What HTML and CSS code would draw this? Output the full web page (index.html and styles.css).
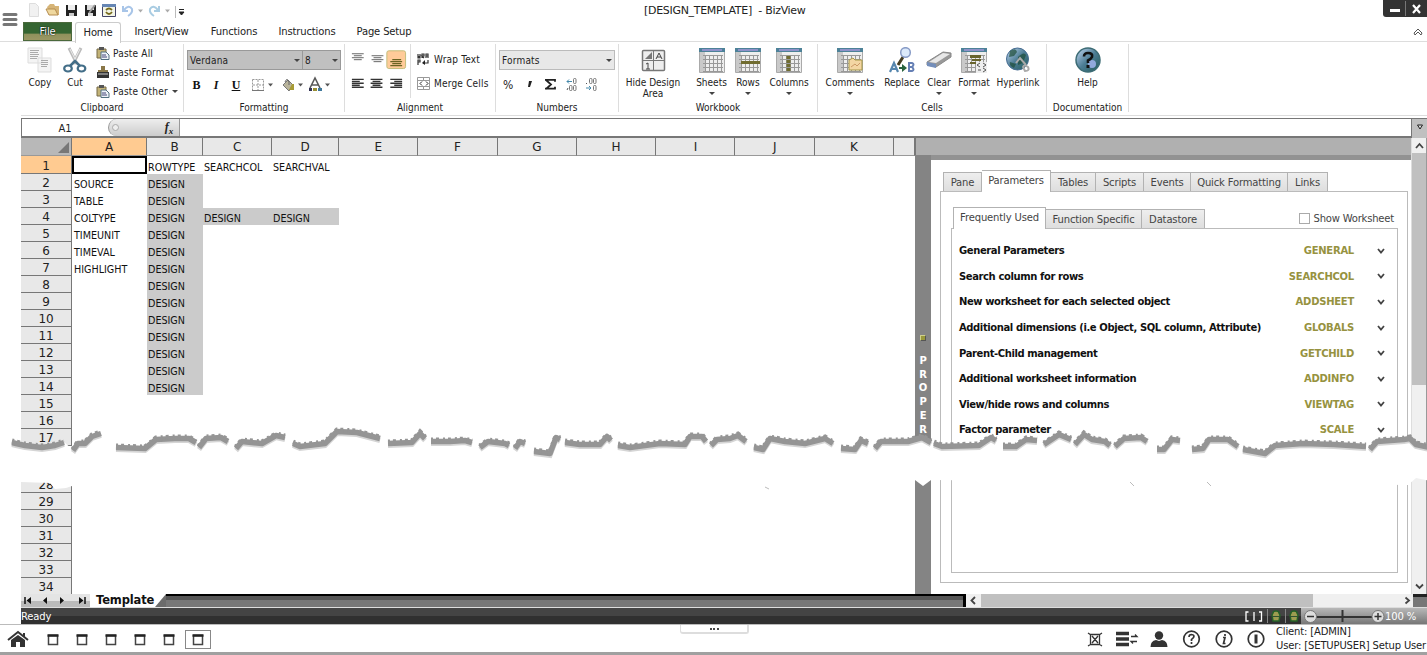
FILE: index.html
```html
<!DOCTYPE html>
<html lang="en">

<head>
    <meta charset="utf-8">
    <title>[DESIGN_TEMPLATE] - BizView</title>
    <link rel="stylesheet" href="styles.css">
</head>

<body>
    <svg class="defs">
        <defs>
            <linearGradient id="blue" x1="0" y1="0" x2="1" y2="1">
                <stop offset="0" stop-color="#c5daf5" /><stop offset=".5" stop-color="#4d7d95" /><stop offset="1" stop-color="#235b58" />
            </linearGradient>
        </defs>
        <symbol id="sheet" viewBox="0 0 26 26">
            <path d="M.5 1.5h25v24H.5z" fill="#eee" stroke="#aaa" />
            <path d="M0 1h26v4H0z" fill="#4d8298" /><path d="M3 2h20v2H3z" fill="#8e91c9" />
            <path d="M1 5h5v20H1z" fill="#c9c9c9" />
            <path d="M6.500 8v16M10.500 8v16M14.500 8v16M18.500 8v16M22.500 8v16M4 8.500h20M4 12.500h20M4 16.500h20M4 20.500h20M4 24.500h20" stroke="#999" />
        </symbol>
        <symbol id="clip" viewBox="0 0 14 13">
            <path d="M1 2h9v9H1z" fill="#c3b377" stroke="#776b48" /><path d="M3 0h5v3H3z" fill="#555" />
            <path d="M5 5h5l3 3v4.500H5z" fill="#edf3f8" stroke="#527080" /><path d="M6 8h4M6 10h5" stroke="#447" />
        </symbol>
        <symbol id="page" viewBox="0 0 26 26">
            <path d="M1 1h14v15H1zM11 11h13v14H11z" fill="#f4f4f4" stroke="#ddd" />
            <path d="M3 3.500h9M3 5.500h8M3 7.500h9M3 9.500h8M3 11.500h7M14 13.500h7M14 15.500h7M14 17.500h7M14 19.500h6" stroke="#aaa" />
        </symbol>
    </svg>

    <header class="titlebar">
        <svg class="burger" width="16" height="16"><path d="M2 2.500h12M2 7.500h12M2 12.500h12" stroke="#777" stroke-width="3" stroke-linecap="round" /></svg>
        <svg class="quick" width="160" height="18">
            <path d="M1.500 2.500h6l3 3v10h-9z" fill="#f1f1f1" stroke="#ddd" />
            <path d="M19 6l3-3h4l1 2h4v9H21z" fill="#d6b477" /><path d="M18 8h9l3 6h-9z" fill="#efd89f" stroke="#b58d50" />
            <path d="M38 4h11v11H38z" fill="#222" /><path d="M40 4h7v5h-7z" fill="#eee" /><path d="M41 12h5v3h-5z" fill="#ccc" />
            <path d="M57 4h11v11H57z" fill="#222" /><path d="M59 4h7v5h-7zM60 12h5v3h-5z" fill="#ddd" /><path d="M61 12l6-8" stroke="#999" stroke-width="2" />
            <path d="M74.500 3.500h13v12h-13z" fill="#f3f5e6" stroke="#446" /><path d="M74 4.500h14" stroke="#6686b4" stroke-width="3" /><path d="M78 9q3-3 6 0M84 11q-3 4-6 0" fill="none" stroke="#776a1c" stroke-width="1.800" />
            <path d="M95 5v5h5M96 9q5-6 8-1 1 4-4 7" fill="none" stroke="#a8c5e8" stroke-width="2" />
            <path d="M110 8.500h5l-2.500 3z" fill="#aaa" />
            <path d="M131 5v5h-5M130 9q-5-6-8-1-1 4 4 7" fill="none" stroke="#a9cce2" stroke-width="2" />
            <path d="M137 8.500h5l-2.500 3z" fill="#aaa" />
            <path d="M147.500 5v12" stroke="#bbb" /><path d="M151 8.500h5M151 11h5l-2.500 3z" stroke="#222" fill="#222" />
        </svg>
        <span class="caption">[DESIGN_TEMPLATE] &nbsp;- BizView</span>
        <svg class="window-buttons" width="44" height="18">
            <path d="M0 0h44v17H3q-3 0-3-3z" fill="#333" /><path d="M22.500 1v15" stroke="#777" /><path d="M7 10.500h10" stroke="#fff" stroke-width="3" />
            <path d="M30 5l7 8M37 5l-7 8" stroke="#fff" stroke-width="2.200" />
        </svg>
    </header>

    <nav class="tabs">
        <span class="tab file">File</span>
        <span class="tab home">Home</span>
        <span class="tab insert">Insert/View</span>
        <span class="tab functions">Functions</span>
        <span class="tab instructions">Instructions</span>
        <span class="tab setup">Page Setup</span>
        <svg class="collapse" width="10" height="8"><path d="M1 5l4-4 4 4-1 2-3-3-3 3z" fill="#fff" stroke="#555" /></svg>
    </nav>

    <section class="ribbon">
        <div class="group clipboard">
            <div class="tools">
                <div class="big w38"><svg width="26" height="26"><use href="#page" /></svg>Copy</div>
                <div class="big w32"><svg width="26" height="26">
                        <path d="M7 1l8 16M19 1l-8 16" stroke="#bbb" stroke-width="3" />
                        <path d="M8 2l7 14M18 2l-7 14" stroke="#eee" />
                        <ellipse cx="6" cy="21.500" rx="3.800" ry="3" fill="none" stroke="#436e88" stroke-width="2.200" /><ellipse cx="19.500" cy="21.500" rx="3.800" ry="3" fill="none" stroke="#436e88" stroke-width="2.200" />
                        <path d="M8 19l5-5 5 5" fill="none" stroke="#436e88" stroke-width="2.500" />
                    </svg>Cut</div>
                <div class="small-list">
                    <div><svg width="14" height="13"><use href="#clip" /></svg>Paste All</div>
                    <div><svg width="14" height="13"><path d="M5 0h4v4h3v2H2V4h3z" fill="#8a7748" /><path d="M1 6h12v6H1z" fill="#333" /><path d="M2 8h10" stroke="#ccc" /></svg>Paste Format</div>
                    <div><svg width="14" height="13"><use href="#clip" /></svg>Paste Other <i class="arrow"></i></div>
                </div>
            </div>
            <div class="group-name">Clipboard</div>
        </div>

        <div class="group formatting">
            <div class="tools stack">
                <div class="combos">
                    <div class="combo font">Verdana<i class="arrow"></i></div>
                    <div class="combo size">8<i class="arrow"></i></div>
                </div>
                <div class="letters">
                    <b>B</b><em>I</em><u>U</u>
                    <svg width="90" height="18">
                        <path d="M6.500 3.500h11v11h-11zM12 4v11M7 9h11" fill="none" stroke="#999" stroke-dasharray="2 1" /><path d="M6 14.500h12" stroke="#777" />
                        <path d="M22 7.500h5l-2.500 3zM52 7.500h5l-2.500 3zM79 7.500h5l-2.500 3z" fill="#555" />
                        <path d="M37 9l5-5 5 5-4 6z" fill="#b9b49c" stroke="#777" /><path d="M39 6q2-5 4 0v3" fill="none" stroke="#666" /><path d="M46 8h2v6h-5z" fill="#a79b35" />
                        <path d="M64 12l5-10 5 10M66 9h6" fill="none" stroke="#595959" stroke-width="1.600" />
                        <path d="M63 12h3v3h-3z" fill="#335" /><path d="M67 12h4v3h-4z" fill="#988e34" /><path d="M72 12h4v3h-4z" fill="#3f789b" />
                    </svg>
                </div>
            </div>
            <div class="group-name">Formatting</div>
        </div>

        <div class="group alignment">
            <div class="tools">
                <svg class="aligns" width="66" height="54" viewBox="0 -1 66 54">
                    <rect x="42.500" y="5.500" width="19" height="18" rx="2" fill="#ffcb99" stroke="#c3bc79" />
                    <path d="M7 8.500h12M9 10.500h8M7 12.500h12M9 14.500h8M27 10.500h12M29 12.500h8M27 14.500h12M29 16.500h8" stroke="#666" />
                    <path d="M48 14.500h9M46 16.500h12M48 18.500h9M46 20.500h12" stroke="#6b6423" stroke-width="1.200" />
                    <path d="M7 34.500h12M7 36.500h8M7 38.500h12M7 40.500h8M7 42.500h12M26 34.500h12M28 36.500h8M26 38.500h12M28 40.500h8M26 42.500h12M46 34.500h12M50 36.500h8M46 38.500h12M50 40.500h8M46 42.500h12" stroke="#333" stroke-width="1.400" />
                </svg>
                <div class="small-list wrap">
                    <div><svg width="14" height="13"><path d="M1 1v4h1v-2v2h1V1M5 5V1h2v2H5l2 2M9 5V1h2v4M9 3h2M1 12V7h2v2H1M6 10h5V7" fill="none" stroke="#333" stroke-width="1.200" /><path d="M5 10l3-3v5z" fill="#222" /></svg>Wrap Text</div>
                    <div><svg width="14" height="13"><path d="M.5.500h12v12H.5zM6.500 0v4M6.500 9v4M0 3.500h13M0 9.500h13" fill="none" stroke="#999" /><path d="M5 4.500L3 6.500l2 2M9 4.500l2 2-2 2" fill="none" stroke="#222" /></svg>Merge Cells</div>
                </div>
            </div>
            <div class="group-name">Alignment</div>
        </div>

        <div class="group numbers">
            <div class="tools stack">
                <div class="combo formats">Formats<i class="arrow"></i></div>
                <div class="signs">
                    <span class="percent">%</span>
                    <svg width="90" height="18">
                        <path d="M12 5h3l-2 6h-2z" fill="#222" />
                        <path d="M28 3.800h10v2M29 4l5 4.500-5 4.500M28 12.700h10v-2" fill="none" stroke="#222" stroke-width="1.800" />
                        <path d="M50 5.500h5M52 3.500l-2 2 2 2" fill="none" stroke="#48a" />
                        <path d="M50 14l1-2M70 7l-1 1" stroke="#555" />
                        <g fill="none" stroke="#777"><rect x="56.500" y="2.500" width="2.500" height="5" rx="1" /><rect x="52.500" y="9.500" width="2.500" height="5" rx="1" /><rect x="56.500" y="9.500" width="2.500" height="5" rx="1" /><rect x="72.500" y="2.500" width="2.500" height="5" rx="1" /><rect x="76.500" y="2.500" width="2.500" height="5" rx="1" /><rect x="76.500" y="9.500" width="2.500" height="5" rx="1" /></g>
                        <path d="M69 12h5M72 10l2 2-2 2" fill="none" stroke="#48a" />
                    </svg>
                </div>
            </div>
            <div class="group-name">Numbers</div>
        </div>

        <div class="group workbook">
            <div class="tools">
                <div class="big w68"><svg width="26" height="26"><rect x="2.500" y="3.500" width="22" height="20" rx="1" fill="#eee" stroke="#777" stroke-width="1.500" /><path d="M13.500 4v19M3 13.500h21" stroke="#777" /><path d="M5 12h7V5z" fill="#777" /><path d="M16 12l3-6 3 6M17 10h4M8 16v6M6 17l2-1M6 22h4" fill="none" stroke="#444" /></svg>Hide Design<br>Area</div>
                <div class="divider"></div>
                <div class="big w49"><svg width="26" height="26"><use href="#sheet" /></svg>Sheets<i class="arrow"></i></div>
                <div class="big w24"><svg width="26" height="26"><use href="#sheet" /><path d="M6 15.500h19" stroke="#706c30" stroke-width="3" /></svg>Rows<i class="arrow"></i></div>
                <div class="big w58"><svg width="26" height="26"><use href="#sheet" /><path d="M12.500 9v16" stroke="#706c30" stroke-width="4" stroke-dasharray="3 1" /></svg>Columns<i class="arrow"></i></div>
            </div>
            <div class="group-name">Workbook</div>
        </div>

        <div class="group cells">
            <div class="tools">
                <div class="big w64"><svg width="26" height="26"><use href="#sheet" /><path d="M12 13l4-2 2 2h7v10H12z" fill="#f4d6a3" stroke="#a69849" /><path d="M14 20l4-3 2 2 3-3" stroke="#c96" fill="none" /></svg>Comments<i class="arrow"></i></div>
                <div class="big w40"><svg width="26" height="26"><path d="M14 10l-5 8" stroke="#443d22" stroke-width="3" /><circle cx="16.500" cy="5.500" r="4.800" fill="#dbe9fa" stroke="#879bc6" stroke-width="1.500" /><path d="M1 25l4-9 4 9M3 22h5" fill="none" stroke="#5586ae" stroke-width="2.200" /><path d="M20 16v8h3q3-1 0-4h-3 3q3-3 0-4z" fill="none" stroke="#6680b5" stroke-width="2" /><path d="M10 20h3v-3l5 4-5 4v-3h-3z" fill="#28633d" /></svg>Replace</div>
                <div class="big w34"><svg width="26" height="26"><path d="M1 15L17 5l8 1v4L10 20l-9-2z" fill="#999" stroke="#888" /><path d="M1 15l9 2v4l-9-2z" fill="#748eba" /><path d="M3 15L17 6l7 1-14 9z" fill="#e8e8e8" /></svg>Clear<i class="arrow"></i></div>
                <div class="big w36"><svg width="26" height="26"><use href="#sheet" /><path d="M9 8h11v3H9zM11 12h9v2h-9zM9 15h9v2H9z" fill="#68642d" /><path d="M15 15h11v11H15z" fill="#eee" /><path d="M19 16l-3 2 3 2M22 16l3 2-3 2M17 23h3M22 21l3 2-3 2" fill="none" stroke="#555" /></svg>Format<i class="arrow"></i></div>
                <div class="big w52"><svg width="26" height="26"><circle cx="12.500" cy="12" r="11" fill="url(#blue)" stroke="#456b91" /><path d="M5 4q6-4 7 1L9 9l-5 1zM13 10q6-6 8-2l-3 8-5 2zM5 15l6 2-2 4q-5-2-4-6z" fill="#1e4d39" opacity=".7" /><path d="M11 16l4-5 6 7M18 20q1-3 5 0 2 4-3 4z" fill="none" stroke="#aaa" stroke-width="2" /></svg>Hyperlink</div>
            </div>
            <div class="group-name">Cells</div>
        </div>

        <div class="group documentation">
            <div class="tools">
                <div class="big w81"><svg width="26" height="26"><circle cx="13" cy="13" r="12" fill="url(#blue)" stroke="#3d6c75" stroke-width="1.500" /><circle cx="17" cy="17" r="4" fill="#91a9dc" /><path d="M9 9.500q0-3.500 4-3.500 5 0 4 4-1 2-4 3.500v2.500" fill="none" stroke="#111" stroke-width="2.600" /><path d="M11.500 18h3v3h-3z" fill="#111" /></svg>Help</div>
            </div>
            <div class="group-name">Documentation</div>
        </div>
    </section>

    <div class="formula">
        <div class="cell-name">A1</div>
        <div class="fx"><i class="knob"></i><span>f<sub>x</sub></span></div>
        <div class="formula-text"></div>
        <div class="expand"><svg width="8" height="7"><path d="M1.500 1h5L4 5z" fill="#ddd" stroke="#222" /></svg></div>
    </div>

    <main class="workspace">
        <table class="grid">
            <thead>
                <tr class="heads">
                    <th class="corner"><svg width="12" height="12"><path d="M12 1v11H1z" fill="#777" /></svg></th>
                    <th class="col-a active">A</th>
                    <th class="col-b">B</th>
                    <th class="col-c">C</th>
                    <th class="col-d">D</th>
                    <th class="col-x">E</th>
                    <th class="col-x">F</th>
                    <th class="col-x">G</th>
                    <th class="col-x">H</th>
                    <th class="col-x">I</th>
                    <th class="col-x">J</th>
                    <th class="col-x">K</th>
                    <th class="col-rest"></th>
                </tr>
            </thead>
            <tbody id="rows"></tbody>
        </table>

        <aside class="side">
            <div class="side-top"></div>
            <div class="properties"><i class="pin"></i><b>P</b><b>R</b><b>O</b><b>P</b><b>E</b><b>R</b></div>
            <div class="panel">
                <div class="panel-tabs outer">
                    <span class="w-pane">Pane</span><span class="w-par on">Parameters</span><span class="w-tab">Tables</span><span class="w-scr">Scripts</span><span class="w-eve">Events</span><span class="w-qf">Quick Formatting</span><span class="w-lin">Links</span>
                </div>
                <div class="outer-box">
                    <div class="panel-tabs inner">
                        <span class="w-freq on">Frequently Used</span><span class="w-func">Function Specific</span><span class="w-data">Datastore</span>
                        <label><i></i>Show Worksheet</label>
                    </div>
                    <div class="inner-box" id="params"></div>
                </div>
            </div>
        </aside>

        <div class="vscroll">
            <svg width="16" height="15"><path d="M4 10l3.500-4 3.500 4" fill="none" stroke="#444" stroke-width="1.800" /></svg>
            <div class="vthumb"></div>
            <svg width="16" height="15"><path d="M4 5.500l3.500 3.500L11 5.500" fill="none" stroke="#444" stroke-width="1.800" /></svg>
        </div>

        <svg class="tear" id="tear" width="1427" height="70" viewBox="0 425 1427 70"></svg>
    </main>

    <div class="sheetbar">
        <svg class="sheet-nav" width="69" height="13"><path d="M4 3v7M64 3v7" stroke="#111" stroke-width="1.500" /><path d="M10 3v7L5.500 6.500zM26 3v7l-4-3.500zM39 3v7l4-3.500zM58 3v7l4.500-3.500z" fill="#111" /></svg>
        <div class="sheet-tab">Template</div>
        <div class="sheet-rest"></div>
        <div class="hscroll">
            <svg width="15" height="13"><path d="M9 3L5.500 6.500 9 10" fill="none" stroke="#444" stroke-width="1.800" /></svg>
            <div class="hthumb"></div>
            <svg width="15" height="13"><path d="M7.500 3.500L11 6.500 7.500 9.500" fill="none" stroke="#444" stroke-width="1.800" /></svg>
        </div>
        <div class="bar-end"></div>
    </div>

    <div class="status">
        <span class="ready">Ready</span>
        <svg class="status-icons" width="56" height="16">
            <path d="M3.500 4H1v9h2.500M9 4v9M14 4h2.500v9H14" fill="none" stroke="#fff" stroke-width="1.300" /><path d="M22.500 1v14M40.500 1v14" stroke="#888" />
            <path d="M31 3q3 0 3 2l1 2-1 6h-6l-1-6 1-2q0-2 3-2zM49 3q3 0 3 2l1 2-1 6h-6l-1-6 1-2q0-2 3-2z" fill="#9d9c50" stroke="#256128" stroke-width="1.500" /><path d="M27 8.500h8M45 8.500h8" stroke="#315330" />
        </svg>
        <div class="zoom">
            <svg width="84" height="16"><path d="M15 9h56M41.500 2v12" stroke="#333" stroke-width="2" /><circle cx="9.500" cy="8.500" r="6" fill="#ddd" stroke="#777" /><circle cx="77" cy="8.500" r="6" fill="#ddd" stroke="#777" /><path d="M6 8.500h7M73.500 8.500h7M77 5v7" stroke="#333" stroke-width="1.500" /></svg>100 %
        </div>
    </div>

    <footer>
        <svg width="218" height="28">
            <path d="M8 15l10-8 10 8M24 8v4" fill="none" stroke="#333" stroke-width="2" /><path d="M11 15l7-5 7 5v7h-5v-5h-4v5h-5z" fill="#333" />
            <g id="panes" fill="none"></g>
            <rect x="185.500" y="5.500" width="25" height="18" fill="none" stroke="#888" />
        </svg>
        <div class="handle"><i></i><i></i><i></i></div>
        <svg class="user-icons" width="190" height="28">
            <path d="M4.500 9.500h9v10h-9zM2 8l3 2M16 8l-3 2M2 21l3-2M16 21l-3-2M6 11l6 7M12 11l-6 7" fill="none" stroke="#333" stroke-width="1.300" />
            <path d="M30 8.500h13M30 14h13M30 19.500h13" stroke="#333" stroke-width="3.700" /><path d="M45 11.500h6l-2-2M51 16.500h-6l2 2" fill="none" stroke="#333" stroke-width="1.300" />
            <circle cx="73" cy="10.500" r="4.200" fill="#333" /><path d="M64.500 22q0-6 5.500-7l3 1 3-1q5.500 1 5.500 7z" fill="#333" />
            <g fill="none" stroke="#333" stroke-width="1.700"><circle cx="105.500" cy="14" r="7.800" /><circle cx="138" cy="14" r="7.800" /><circle cx="170" cy="14" r="7.800" /><path d="M103 12q0-2.500 2.500-2.500 3.500.3 2 3l-2 2v1.500M105.500 17v2M139 9v2M137 12.500h2l-1.500 6h2" /><path d="M170 9.500v9" stroke-width="3" /></g>
        </svg>
        <div class="user">Client: [ADMIN]<br>User: [SETUPUSER] Setup User</div>
    </footer>

    <script src="script.js"></script>
</body>

</html>
```

FILE: styles.css
```css
* {
    box-sizing: border-box;
}

body {
    margin: 0;
    width: 1427px;
    height: 655px;
    overflow: hidden;
    position: relative;
    background: #fff;
    color: #222;
    font-family: "DejaVu Sans", Verdana, sans-serif;
    font-size: 10px;
    letter-spacing: -0.15px;
}

svg {
    display: block;
    flex: none;
}

.defs {
    position: absolute;
    width: 0;
    height: 0;
}

.arrow {
    width: 0;
    border: 3px solid transparent;
    border-top-color: #444;
    border-bottom: 0;
}

/* title and tabs */
.titlebar {
    display: flex;
    height: 22px;
}

.burger {
    margin: 12px 10px -6px 2px;
}

.quick {
    margin-top: 1px;
}

.caption {
    margin: 4px auto 0 456px;
    font-size: 11px;
    letter-spacing: -0.3px;
    white-space: nowrap;
}

.tabs {
    display: flex;
    height: 20px;
    padding-left: 23px;
    border-bottom: 1px solid #ddd;
    position: relative;
}

.tab {
    text-align: center;
    line-height: 20px;
}

.file {
    width: 49px;
    height: 19px;
    color: #fff;
    background: linear-gradient(#356532 0 60%, #8f915c 65%, #9b9764);
    border: 1px solid #4b693c;
    text-shadow: 0 0 1px #000, 0 0 1px #000;
    line-height: 18px;
}

.home {
    width: 46px;
    height: 21px;
    margin-left: 3px;
    background: #fff;
    border: 1px solid #ccc;
    border-bottom: 0;
    border-radius: 3px 3px 0 0;
}

.insert { width: 81px; }
.functions { width: 64px; }
.instructions { width: 82px; }
.setup { width: 72px; }

.collapse {
    position: absolute;
    right: 4px;
    top: 6px;
}

/* ribbon */
.ribbon {
    display: flex;
    height: 74px;
    margin-left: 21px;
    padding-top: 2px;
    border-bottom: 1px solid #ddd;
    font-family: "DejaVu Sans Condensed", "DejaVu Sans", sans-serif;
    letter-spacing: 0;
}

.group {
    height: 68px;
    border-right: 1px solid #ddd;
}

.clipboard { width: 163px; }
.formatting { width: 161px; }
.alignment { width: 151px; }
.numbers { width: 123px; }
.workbook { width: 199px; }
.cells { width: 229px; }
.documentation { width: 82px; }

.tools {
    display: flex;
    height: 57px;
}

.stack {
    flex-direction: column;
    padding: 6px 3px 0;
}

.group-name {
    text-align: center;
    line-height: 14px;
}

.big {
    display: flex;
    flex-direction: column;
    flex: none;
    align-items: center;
    padding-top: 3px;
    line-height: 11px;
    white-space: nowrap;
    text-align: center;
}

.big svg {
    margin-bottom: 4px;
}

.big .arrow {
    margin-top: 4px;
}

.w24 { width: 24px; }
.w32 { width: 32px; }
.w34 { width: 34px; }
.w36 { width: 36px; }
.w38 { width: 38px; }
.w40 { width: 40px; }
.w49 { width: 49px; }
.w52 { width: 52px; }
.w58 { width: 58px; }
.w64 { width: 64px; }
.w68 { width: 68px; }
.w81 { width: 81px; }

.divider {
    width: 1px;
    height: 46px;
    margin-top: 4px;
    background: #ddd;
}

.small-list {
    margin-left: 5px;
    white-space: nowrap;
    letter-spacing: 0.2px;
}

.small-list div {
    display: flex;
    align-items: center;
    gap: 3px;
    height: 19px;
}

.small-list .arrow {
    margin-left: 1px;
}

.wrap {
    margin: 3px 0 0 6px;
}

.wrap div {
    height: 24px;
}

.aligns {
    border-right: 1px solid #ddd;
}

.combos {
    display: flex;
    width: 154px;
}

.combo {
    display: flex;
    align-items: center;
    justify-content: space-between;
    height: 20px;
    padding: 0 2px 0 2px;
    border: 1px solid #999;
    background: #c0c0c0;
    letter-spacing: 0.2px;
}

.font { width: 116px; }

.size {
    width: 39px;
    margin-left: -1px;
}

.formats {
    width: 116px;
    background: #e8e8e8;
    border-color: #bbb;
}

.letters {
    display: flex;
    margin-top: 6px;
    font: bold 12px/18px "Liberation Serif", serif;
    color: #111;
}

.letters b {
    width: 19px;
    text-align: center;
}

.letters em,
.letters u {
    width: 20px;
    text-align: center;
}

.signs {
    display: flex;
    margin-top: 6px;
    line-height: 18px;
    font-size: 12px;
}

.percent {
    width: 18px;
    padding-left: 4px;
}

/* formula bar */
.formula {
    display: flex;
    height: 20px;
    margin: 2px 0 0 21px;
    border: 1px solid #777;
    border-width: 1px 0 2px 1px;
}

.cell-name {
    width: 86px;
    line-height: 20px;
    text-align: center;
}

.fx {
    display: flex;
    justify-content: space-between;
    width: 72px;
    padding-right: 6px;
    border: 1px solid #999;
    border-width: 0 1px 0 1px;
    border-radius: 9px 0 0 9px;
    background: linear-gradient(#eee, #ccc);
    font: italic bold 12px/16px "Liberation Serif", serif;
}

.fx sub {
    font-size: 9px;
    line-height: 0;
}

.knob {
    width: 7px;
    height: 7px;
    margin: 5px 0 0 3px;
    border: 1px solid #aaa;
    border-radius: 50%;
    background: #eee;
}

.formula-text {
    flex: 1;
    border-right: 1px solid #777;
}

.expand {
    width: 15px;
    height: 19px;
    padding: 5px 4px;
    background: #c0c0c0;
}

/* workspace */
.workspace {
    display: flex;
    height: 456px;
    margin-left: 21px;
    overflow: hidden;
}

.grid {
    width: 894px;
    flex: none;
    height: 0;
    border-collapse: separate;
    border-spacing: 0;
    table-layout: fixed;
}

.grid th {
    padding: 0;
    font-weight: normal;
    font-size: 12px;
    background: #e8e8e8;
    border-right: 1px solid #777;
    border-bottom: 1px solid #777;
    line-height: 16px;
}

.grid tbody th {
    padding-top: 2px;
    line-height: 14px;
}

.heads th {
    height: 18px;
    border-bottom-color: #999;
}

.grid .corner {
    width: 51px;
    background: #b8b8b8;
}

.corner svg {
    margin: 1px 0 0 36px;
}

.col-a { width: 75px; }
.col-b { width: 56px; }
.col-c { width: 69px; }
.col-d { width: 67px; }
.col-x { width: 79.300px; }

.grid .active {
    background: #ffcb91;
}

.grid td {
    height: 17px;
    padding: 5px 0 0 2px;
    font-size: 9.600px;
    line-height: 12px;
    letter-spacing: 0;
    white-space: nowrap;
    color: #111;
}

.grid td + td {
    padding-left: 1px;
}

.grid .marked {
    background: #cbcbcb;
}

.grid .cursor {
    padding: 0;
    border: 2px solid #000;
    outline: 1px solid #000;
    outline-offset: -1px;
}

.grid tr:first-child td,
.grid tr:first-child th {
    height: 18px;
}

.grid .gap {
    height: 30px;
}

.side {
    display: grid;
    grid-template: 17px 439px / 16px 480px;
    width: 496px;
}

.side-top {
    grid-column: 1 / 3;
    background: #b0b0b0;
    border-left: 1px solid #777;
}

.properties {
    display: flex;
    flex-direction: column;
    align-items: center;
    background: #848484;
    color: #fff;
    font-size: 10px;
    line-height: 13.700px;
}

.pin {
    width: 6px;
    height: 6px;
    margin: 180px 0 13px;
    border: 1px solid #d0d08c;
    border-right-color: #555;
    border-bottom-color: #555;
    background: #99983b;
}

.panel {
    padding: 10px 3px 0 9px;
    border-top: 5px solid #929292;
    background: #fff;
    color: #444;
}

.panel-tabs {
    display: flex;
    align-items: flex-end;
    height: 21px;
    position: relative;
    line-height: 19px;
}

.panel-tabs span {
    height: 19px;
    text-align: center;
    border: 1px solid #b2b2b2;
    border-width: 1px 1px 0 0;
    background: linear-gradient(#eee, #dedede);
    white-space: nowrap;
}

.panel-tabs span:first-child {
    border-left-width: 1px;
}

.panel-tabs .on {
    height: 22px;
    margin-bottom: -1px;
    background: #fff;
    z-index: 1;
}

.outer { padding-left: 3px; }
.w-pane { width: 39px; }
.w-par { width: 69px; }
.w-tab { width: 45px; }
.w-scr { width: 48px; }
.w-eve { width: 47px; }
.w-qf { width: 97px; }
.w-lin { width: 40px; }
.w-freq { width: 93px; }
.w-func { width: 96px; }
.w-data { width: 63px; }

.outer-box {
    height: 392px;
    padding: 15px 9px 0 10px;
    border: 1px solid #bbb;
}

.inner {
    padding-left: 2px;
}

.inner label {
    display: flex;
    align-items: center;
    gap: 4px;
    margin: 0 4px 0 auto;
    letter-spacing: -0.2px;
}

.inner label i {
    width: 11px;
    height: 11px;
    border: 1px solid #aaa;
}

.inner-box {
    height: 345px;
    padding-top: 9px;
    border: 1px solid #bbb;
    overflow: hidden;
}

.param {
    display: flex;
    align-items: center;
    height: 25.600px;
    padding: 0 12px 0 7px;
    font-weight: bold;
    color: #111;
    letter-spacing: -0.4px;
}

.param .tag {
    margin: 0 23px 0 auto;
    color: #969240;
    letter-spacing: -0.25px;
}

.vscroll {
    width: 16px;
    height: 456px;
    border-left: 1px solid #ddd;
    border-right: 1px solid #999;
    background: #f0f0f0;
    display: flex;
    flex-direction: column;
}

.vthumb {
    height: 232px;
    margin-bottom: auto;
    background: #c0c0c0;
}

.tear {
    position: absolute;
    left: 0;
    top: 425px;
}

/* bottom bars */
.sheetbar {
    display: flex;
    height: 13px;
    margin-left: 21px;
    background: #6b6b6b;
}

.sheet-nav {
    background: linear-gradient(#e4e4e4 50%, #bbb 50%);
}

.sheet-tab {
    width: 76px;
    padding-left: 6px;
    background: #fff;
    clip-path: polygon(0 0, 100% 0, 65px 100%, 0 100%);
    color: #111;
    font: bold 11.500px/13px "DejaVu Sans", sans-serif;
}

.sheet-rest {
    flex: 1;
    border: solid #000;
    border-width: 2px 3px 0 0;
    background: linear-gradient(#565656 40%, #777 40%);
}

.hscroll {
    display: flex;
    width: 447px;
    background: #f0f0f0;
}

.hthumb {
    width: 332px;
    margin-right: auto;
    background: #c0c0c0;
}

.bar-end {
    width: 14px;
    border-top: 3px solid #222;
    background: #777;
}

.status {
    display: flex;
    height: 17px;
    margin-left: 21px;
    border-top: 1px solid #ddd;
    background: linear-gradient(#444 50%, #303030 50%);
    color: #fff;
    line-height: 17px;
}

.status-icons {
    margin-left: auto;
}

.zoom {
    display: flex;
    width: 126px;
    background: linear-gradient(#b8b8b8, #777);
}

footer {
    display: flex;
    height: 31px;
    border-top: 1px solid #bbb;
    border-bottom: 3px solid #a0a0a0;
    position: relative;
}

.handle {
    position: absolute;
    left: 680px;
    top: 0;
    display: flex;
    justify-content: center;
    gap: 1.500px;
    width: 69px;
    height: 9px;
    padding-top: 3px;
    border: solid #ddd;
    border-width: 0 2px 2px 1px;
    border-radius: 0 0 3px 3px;
}

.handle i {
    width: 2px;
    height: 2px;
    background: #444;
}

.user-icons {
    margin-left: auto;
}

.user {
    width: 151px;
    height: 28px;
    line-height: 13.500px;
    white-space: nowrap;
}
```

FILE: script.js
```js
const names = ["", "SOURCE", "TABLE", "COLTYPE", "TIMEUNIT", "TIMEVAL", "HIGHLIGHT"];
const params = [
    ["General Parameters", "GENERAL"],
    ["Search column for rows", "SEARCHCOL"],
    ["New worksheet for each selected object", "ADDSHEET"],
    ["Additional dimensions (i.e Object, SQL column, Attribute)", "GLOBALS"],
    ["Parent-Child management", "GETCHILD"],
    ["Additional worksheet information", "ADDINFO"],
    ["View/hide rows and columns", "VIEWTAG"],
    ["Factor parameter", "SCALE"]
];

function row(n) {
    let cells = `<th${n == 1 ? ' class="active"' : ""}>${n}</th>`;
    cells += `<td${n == 1 ? ' class="cursor"' : ""}>${names[n - 1] || ""}</td>`;
    if (n == 1) {
        cells += "<td>ROWTYPE</td><td>SEARCHCOL</td><td>SEARCHVAL</td>";
    } else if (n <= 14) {
        cells += '<td class="marked">DESIGN</td>';
    }
    if (n == 4) {
        cells += '<td class="marked">DESIGN</td><td class="marked">DESIGN</td>';
    }
    return `<tr>${cells}</tr>`;
}

let html = "";
for (let n = 1; n <= 17; n++) html += row(n);
html += '<tr><td class="gap"></td></tr>';
for (let n = 28; n <= 34; n++) html += row(n);
document.getElementById("rows").innerHTML = html;

const chevron = '<svg width="8" height="8"><path d="M1 2l3 3.500L7 2" fill="none" stroke="#444" stroke-width="1.800"/></svg>';
document.getElementById("params").innerHTML = params
    .map(p => `<div class="param">${p[0]}<span class="tag">${p[1]}</span>${chevron}</div>`).join("");

let panes = "";
for (let i = 0; i < 6; i++) {
    const x = 48.5 + i * 29;
    panes += `<path d="M${x} 10.500h9v9h-9z" stroke="#444" stroke-width="1.500"/><path d="M${x - 1} 10.500h11" stroke="#222" stroke-width="2.500"/>`;
}
document.getElementById("panes").innerHTML = panes;

// torn paper edge, one list per ridge
const ridges = [
    "12,442 16,443 25,445 42,447 55,445 64,442",
    "73,450 78,443 85,443 92,436 101,433",
    "116,447 145,448 156,439 175,438 189,438 196,442",
    "199,447 206,438 221,437 228,441",
    "236,448 242,441 262,443 276,435 285,437",
    "293,443 300,446 325,443 337,431 357,432 380,438",
    "388,443 412,442 420,433 425,438",
    "431,441 450,441 465,440 472,442",
    "480,447 488,441 505,443 509,445",
    "515,448 520,441 525,443",
    "534,451 550,453 556,437 560,439",
    "565,442 580,444 600,444 607,436 611,440",
    "618,445 630,447 660,443 685,444 690,436 702,436 706,441",
    "711,445 717,439 730,438 738,435 746,441",
    "754,447 763,449 770,438 785,441 805,443 825,438 833,443",
    "841,448 855,449 861,440 868,443",
    "875,448 881,441 908,441 922,437 931,442",
    "934,443 942,446 979,445 991,437 996,440",
    "1003,446 1016,446 1026,439 1037,440",
    "1044,444 1059,434 1071,439",
    "1075,444 1084,434 1092,439 1105,441 1110,445",
    "1115,446 1124,438 1141,437 1147,441",
    "1157,449 1164,449 1172,439 1180,440",
    "1192,449 1203,448 1209,439 1228,439 1238,446",
    "1243,449 1265,453 1275,445 1303,443 1334,444 1366,446",
    "1370,449 1377,441 1404,439 1410,438 1416,444 1430,447"
];
let tear = `<path d="M0 441L${ridges.join(" ")}V481L1416 478 1408 485 1230 483 931 480 923 486 915 480 72 486 66 488 55 489 50 483 21 482 0 480z" fill="#fff"/>`;
for (const r of ridges) {
    tear += `<polyline points="${r}" transform="translate(0 2.500)" fill="none" stroke="#d5d5d5" stroke-width="5"/>`;
    tear += `<polyline points="${r}" transform="translate(0 .5)" fill="none" stroke="#959595" stroke-width="5.500" stroke-linejoin="round"/>`;
    tear += `<polyline points="${r}" transform="translate(0 -1)" fill="none" stroke="#959595" stroke-width="5" stroke-dasharray="2 3 3 4"/>`;
}
tear += '<path d="M765 487l4 2M1130 482l4 4M1207 482l4 4" stroke="#bbb"/>';
document.getElementById("tear").innerHTML = tear;
```
